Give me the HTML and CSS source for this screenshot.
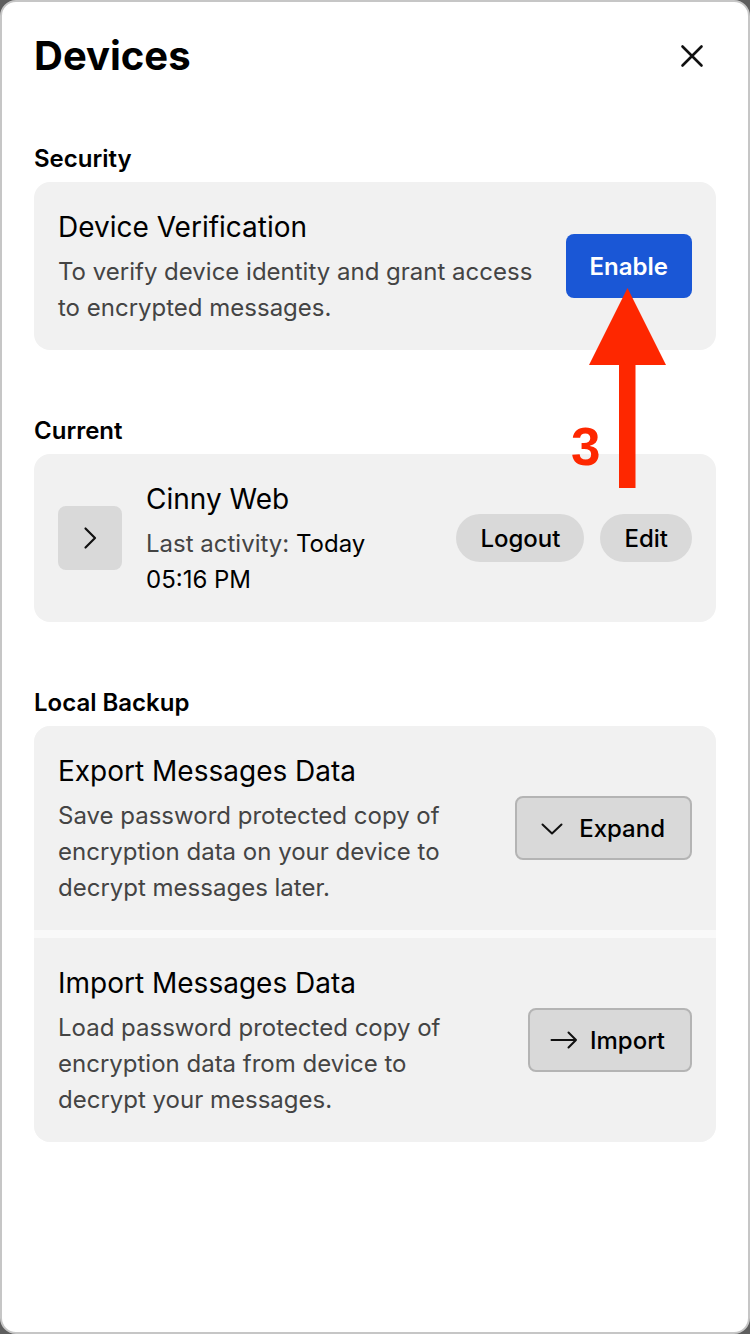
FILE: index.html
```html
<!DOCTYPE html>
<html lang="en">
<head>
<meta charset="utf-8">
<title>Devices</title>
<link rel="stylesheet" href="styles.css">
</head>
<body>
<div class="frame">
  <header class="head">
    <h1 class="page-title">Devices</h1>
    <button class="close" aria-label="Close">
      <svg width="24" height="24" viewBox="0 0 24 24"><path d="M2.5 2.5L21.5 21.5M21.5 2.5L2.5 21.5" stroke="#111" stroke-width="2.6" stroke-linecap="round" fill="none"/></svg>
    </button>
  </header>

  <section class="sec sec-first">
    <h2 class="sec-label">Security</h2>
    <div class="card">
      <div class="info">
        <div class="title">Device Verification</div>
        <div class="desc">To verify device identity and grant access to encrypted messages.</div>
      </div>
      <button class="btn-primary">Enable</button>
    </div>
  </section>

  <section class="sec">
    <h2 class="sec-label">Current</h2>
    <div class="card">
      <div class="chev-box">
        <svg width="24" height="24" viewBox="0 0 24 24"><path d="M7.5 2.5L17 12L7.5 21.5" stroke="#111" stroke-width="2.2" stroke-linecap="round" stroke-linejoin="round" fill="none"/></svg>
      </div>
      <div class="info">
        <div class="title">Cinny Web</div>
        <div class="desc">Last activity: <span class="strong">Today <span class="nowrap">05:16 PM</span></span></div>
      </div>
      <div class="pills">
        <button class="pill">Logout</button>
        <button class="pill">Edit</button>
      </div>
    </div>
  </section>

  <section class="sec">
    <h2 class="sec-label">Local Backup</h2>
    <div class="backup">
      <div class="item">
        <div class="info">
          <div class="title">Export Messages Data</div>
          <div class="desc narrow">Save password protected copy of encryption data on your device to decrypt messages later.</div>
        </div>
        <button class="btn-outline btn-expand">
          <svg class="ico-down" width="22" height="12" viewBox="0 0 22 12"><path d="M1.5 1.5L11 10.5L20.5 1.5" stroke="#111" stroke-width="2" stroke-linecap="round" stroke-linejoin="round" fill="none"/></svg>
          <span>Expand</span>
        </button>
      </div>
      <div class="item">
        <div class="info">
          <div class="title">Import Messages Data</div>
          <div class="desc narrow">Load password protected copy of encryption data from device to decrypt your messages.</div>
        </div>
        <button class="btn-outline btn-import">
          <svg width="28" height="18" viewBox="0 0 28 18"><path d="M1.5 9H26M18.5 1.5L26 9L18.5 16.5" stroke="#111" stroke-width="2" stroke-linecap="round" stroke-linejoin="round" fill="none"/></svg>
          <span>Import</span>
        </button>
      </div>
    </div>
  </section>

  <svg class="annot" width="750" height="1334" viewBox="0 0 750 1334">
    <polygon points="627.5,288 589,365 666,365" fill="#fe2700"/>
    <rect x="619" y="364" width="16.5" height="124" fill="#fe2700"/>
    <text x="571" y="465" class="annot-num">3</text>
  </svg>
</div>
</body>
</html>
```

FILE: styles.css
```css
* {
  box-sizing: border-box;
  margin: 0;
  padding: 0;
}

html, body {
  background: #5e5e5e;
}

body {
  margin: 0;
  font-family: Inter, "Noto Sans", sans-serif;
  color: #000;
}

.frame {
  position: relative;
  width: 750px;
  height: 1334px;
  border: 2px solid #c6c6c6;
  border-radius: 16px;
  background: #fff;
  padding: 30px 32px 0;
  overflow: hidden;
}

.head {
  display: flex;
  justify-content: space-between;
  align-items: center;
  height: 48px;
}

.page-title {
  font-size: 40px;
  font-weight: 700;
  line-height: 48px;
}

.close {
  width: 48px;
  height: 48px;
  display: flex;
  align-items: center;
  justify-content: center;
  background: none;
  border: 0;
}

.sec {
  margin-top: 67px;
}

.sec-first {
  margin-top: 65px;
}

.sec-label {
  font-size: 24px;
  font-weight: 600;
  line-height: 28px;
  margin-bottom: 9px;
}

.card {
  background: #f1f1f1;
  border-radius: 16px;
  padding: 24px;
  display: flex;
  align-items: center;
  gap: 24px;
}

.info {
  flex: 1;
  min-width: 0;
}

.title {
  font-size: 28px;
  line-height: 42px;
  font-weight: 400;
  color: #000;
}

.desc {
  font-size: 24px;
  line-height: 36px;
  color: #444;
  margin-top: 6px;
}

.desc.narrow {
  max-width: 410px;
}

.strong {
  color: #000;
}

.nowrap {
  white-space: nowrap;
}

button {
  font-family: inherit;
  color: #000;
  cursor: pointer;
}

.btn-primary {
  height: 64px;
  padding: 0 24px;
  border: 0;
  border-radius: 8px;
  background: #1a57d6;
  color: #fff;
  font-size: 24px;
  font-weight: 600;
  flex: none;
}

.chev-box {
  width: 64px;
  height: 64px;
  border-radius: 8px;
  background: #d9d9d9;
  display: flex;
  align-items: center;
  justify-content: center;
  flex: none;
}

.pills {
  display: flex;
  gap: 16px;
  flex: none;
}

.pill {
  height: 48px;
  padding: 0 24px;
  border: 0;
  border-radius: 24px;
  background: #d9d9d9;
  font-size: 24px;
  font-weight: 500;
}

.backup {
  border-radius: 16px;
  overflow: hidden;
  display: flex;
  flex-direction: column;
  gap: 8px;
  background: #f9f9f9;
}

.item {
  background: #f1f1f1;
  padding: 24px;
  display: flex;
  align-items: center;
  gap: 24px;
}

.btn-outline {
  height: 64px;
  display: flex;
  align-items: center;
  flex: none;
  border: 2px solid #b4b4b4;
  border-radius: 8px;
  background: #d9d9d9;
  font-size: 24px;
  font-weight: 500;
}

.btn-expand {
  padding: 0 25px 0 24px;
  gap: 16px;
}

.ico-down {
  margin-top: 2px;
}

.btn-import {
  padding: 0 25px 0 20px;
  gap: 12px;
}

.annot {
  position: absolute;
  left: -2px;
  top: -2px;
  pointer-events: none;
}

.annot-num {
  font-family: "Liberation Sans", Arial, sans-serif;
  font-weight: 700;
  font-size: 53px;
  fill: #fe2700;
}
```
